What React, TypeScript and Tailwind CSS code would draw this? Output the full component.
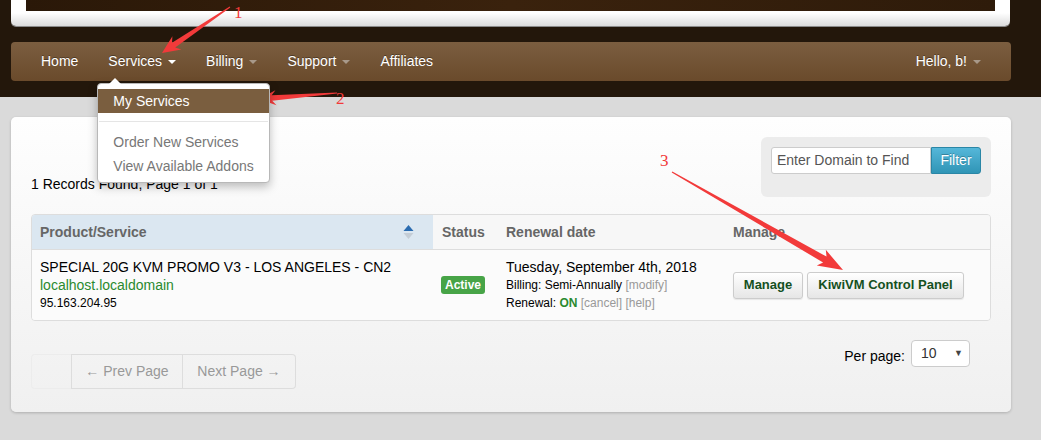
import React from 'react';

type Pt = [number, number];

// tapered red annotation arrow, tail thin and the head barbed
function arrowPath(tail: Pt, tip: Pt, head: number, hw: number, sw: number) {
  const [x1, y1] = tail;
  const [x2, y2] = tip;
  const L = Math.hypot(x2 - x1, y2 - y1);
  const ux = (x2 - x1) / L;
  const uy = (y2 - y1) / L;
  const nx = -uy;
  const ny = ux;
  const bx = x2 - ux * head;
  const by = y2 - uy * head;
  const jx = bx + ux * 4;
  const jy = by + uy * 4;
  const p = (x: number, y: number) => `${x.toFixed(1)},${y.toFixed(1)}`;
  return [
    p(x1 + nx * 0.6, y1 + ny * 0.6),
    p(jx + nx * sw, jy + ny * sw),
    p(bx + nx * hw, by + ny * hw),
    p(x2, y2),
    p(bx - nx * hw, by - ny * hw),
    p(jx - nx * sw, jy - ny * sw),
    p(x1 - nx * 0.6, y1 - ny * 0.6),
  ].join(' ');
}

function Caret({ light }: { light?: boolean }) {
  return (
    <span
      className={`ml-[6px] inline-block h-0 w-0 border-x-[4px] border-t-[4px] border-x-transparent align-middle ${
        light ? 'border-t-white' : 'border-t-[#a8998a]'
      }`}
    />
  );
}

export default function App() {
  return (
    <div className="relative h-[440px] w-[1041px] overflow-hidden bg-[#dadada] font-['Liberation_Sans',Arial,sans-serif] text-[14px] text-black">
      {/* Dark header band */}
      <div className="h-[97px] bg-[#23170b] pl-[11px]">
        <div className="h-[26px] w-[999px] rounded-b-[5px] bg-gradient-to-b from-white via-white to-[#dcdcdc] px-[15px] shadow-[0_1px_0_#8a8a8a]">
          <div className="h-[11px] bg-gradient-to-r from-[#2a1808] via-[#3a220d] to-[#2e1b0a]" />
        </div>

        {/* Navbar */}
        <div className="relative mt-[16px] flex h-[39px] w-[1000px] items-center justify-between rounded-[4px] bg-gradient-to-b from-[#7b5e40] to-[#6a4a2b] pl-[15px] pr-[15px] text-white [text-shadow:0_-1px_0_rgba(0,0,0,0.35)]">
          <div className="flex items-center">
            <span className="px-[15px]">Home</span>
            <span className="relative px-[15px]">
              Services
              <Caret light />
              {/* Dropdown */}
              <div className="absolute left-[4px] top-[32px] z-10 w-[173px] whitespace-nowrap rounded-[4px] border border-[#b8b8b8] bg-white pb-[4px] pt-[5px] text-[#777] shadow-[0_4px_10px_rgba(0,0,0,0.25)] [text-shadow:none]">
                <div className="absolute left-[11px] top-[-6px] h-0 w-0 border-x-[6px] border-b-[6px] border-x-transparent border-b-white" />
                <div className="flex h-[24px] items-center bg-[#7a5e3f] px-[15px] text-white">My Services</div>
                <div className="mx-[1px] my-[8px] h-px bg-[#e5e5e5]" />
                <div className="flex h-[24px] items-center px-[15px]">Order New Services</div>
                <div className="flex h-[24px] items-center px-[15px]">View Available Addons</div>
              </div>
            </span>
            <span className="px-[15px]">
              Billing
              <Caret />
            </span>
            <span className="px-[15px]">
              Support
              <Caret />
            </span>
            <span className="px-[15px]">Affiliates</span>
          </div>
          <span className="px-[15px]">
            Hello, b!
            <Caret />
          </span>
        </div>
      </div>

      {/* Main panel */}
      <div className="pl-[11px] pt-[20px]">
        <div className="h-[295px] w-[1000px] rounded-[5px] bg-gradient-to-b from-[#fefefe] to-[#f0f0f0] px-[20px] pt-[20px] shadow-[0_1px_3px_rgba(0,0,0,0.2)]">
          <div className="flex items-end justify-between">
            <div className="mb-[3px] leading-[20px]">1 Records Found, Page 1 of 1</div>
            <div className="h-[60px] w-[230px] rounded-[6px] bg-[#ececec] p-[10px]">
              <div className="flex h-[27px]">
                <div className="flex w-[160px] items-center rounded-l-[3px] border border-[#cccccc] bg-white px-[5px] text-[#555]">
                  Enter Domain to Find
                </div>
                <div className="flex w-[50px] items-center justify-center rounded-r-[3px] border border-[#2a86a6] bg-gradient-to-b from-[#55b7d9] to-[#2f95b6] text-white [text-shadow:0_-1px_0_rgba(0,0,0,0.25)]">
                  Filter
                </div>
              </div>
            </div>
          </div>

          {/* Table */}
          <div className="mt-[17px] overflow-hidden rounded-[4px] border border-[#dddddd]">
            <div className="flex h-[35px] border-b border-[#dddddd] font-bold text-[#666]">
              <div className="flex w-[401px] items-center justify-between bg-[#dbe7f1] pl-[8px] pr-[19px]">
                <span>Product/Service</span>
                <svg width="11" height="18" viewBox="0 0 11 18">
                  <path d="M0.5 8 L5.5 2 L10.5 8 Z" fill="#2b6cb0" />
                  <path d="M0.5 10 L5.5 16 L10.5 10 Z" fill="#c4cdd6" />
                </svg>
              </div>
              <div className="flex w-[65px] items-center bg-[#f7f7f7] pl-[9px]">Status</div>
              <div className="flex w-[227px] items-center bg-[#f7f7f7] pl-[8px]">Renewal date</div>
              <div className="flex flex-1 items-center bg-[#f7f7f7] pl-[8px]">Manage</div>
            </div>
            <div className="flex h-[70px] bg-[#fbfbfb]">
              <div className="w-[401px] pl-[8px] pt-[8px] leading-[18px]">
                <div>SPECIAL 20G KVM PROMO V3 - LOS ANGELES - CN2</div>
                <div className="text-[#2a8a2f]">localhost.localdomain</div>
                <div className="text-[12px]">95.163.204.95</div>
              </div>
              <div className="flex w-[65px] items-center pl-[8px]">
                <span className="rounded-[3px] bg-[#47a447] px-[4px] py-[1px] text-[12px] font-bold leading-[16px] text-white">
                  Active
                </span>
              </div>
              <div className="w-[227px] pl-[8px] pt-[8px] leading-[18px]">
                <div>Tuesday, September 4th, 2018</div>
                <div className="text-[12px]">
                  Billing: Semi-Annually <span className="text-[#999]">[modify]</span>
                </div>
                <div className="text-[12px]">
                  Renewal: <span className="font-bold text-[#2a8a2f]">ON</span>{' '}
                  <span className="text-[#999]">[cancel]</span> <span className="text-[#999]">[help]</span>
                </div>
              </div>
              <div className="flex flex-1 items-center gap-[4px] pl-[8px]">
                <span className="flex h-[27px] w-[70px] items-center justify-center rounded-[3px] border border-[#cccccc] bg-gradient-to-b from-white to-[#e6e6e6] text-[13px] font-bold text-[#14501e] shadow-[0_1px_1px_rgba(0,0,0,0.08)]">
                  Manage
                </span>
                <span className="flex h-[27px] w-[157px] items-center justify-center rounded-[3px] border border-[#cccccc] bg-gradient-to-b from-white to-[#e6e6e6] text-[13px] font-bold text-[#14501e] shadow-[0_1px_1px_rgba(0,0,0,0.08)]">
                  KiwiVM Control Panel
                </span>
              </div>
            </div>
          </div>

          {/* Pagination + per page */}
          <div className="mt-[19px] flex items-start justify-between">
            <div className="mt-[14px] flex h-[35px] text-[#999]">
              <div className="w-[40px] rounded-l-[4px] border border-r-0 border-[#ececec]" />
              <div className="flex w-[112px] items-center justify-center border border-[#dddddd]">← Prev Page</div>
              <div className="flex w-[113px] items-center justify-center rounded-r-[4px] border border-l-0 border-[#dddddd]">
                Next Page →
              </div>
            </div>
            <div className="mr-[21px] flex items-center">
              <span className="mr-[6px] mt-[5px]">Per page:</span>
              <div className="flex h-[27px] w-[59px] items-center justify-between rounded-[4px] border border-[#cccccc] bg-white pl-[9px] pr-[6px] text-[#333]">
                <span>10</span>
                <span className="text-[9px] text-[#444]">▼</span>
              </div>
            </div>
          </div>
        </div>
      </div>

      {/* Red annotations */}
      <svg className="pointer-events-none absolute left-0 top-0" width="1041" height="440">
        <polygon points={arrowPath([230, 7], [162, 53], 18, 8, 2.8)} fill="#f23a3a" />
        <polygon points={arrowPath([337, 93], [259, 99], 17, 7.5, 2.8)} fill="#f23a3a" />
        <polygon points={arrowPath([672, 172], [843, 270], 25, 9, 3.4)} fill="#f23a3a" />
        <text x="234" y="18" fill="#f23a3a" fontSize="17" fontFamily="Liberation Serif, serif">1</text>
        <text x="336" y="104" fill="#f23a3a" fontSize="17" fontFamily="Liberation Serif, serif">2</text>
        <text x="660" y="166" fill="#f23a3a" fontSize="17" fontFamily="Liberation Serif, serif">3</text>
      </svg>
    </div>
  );
}
